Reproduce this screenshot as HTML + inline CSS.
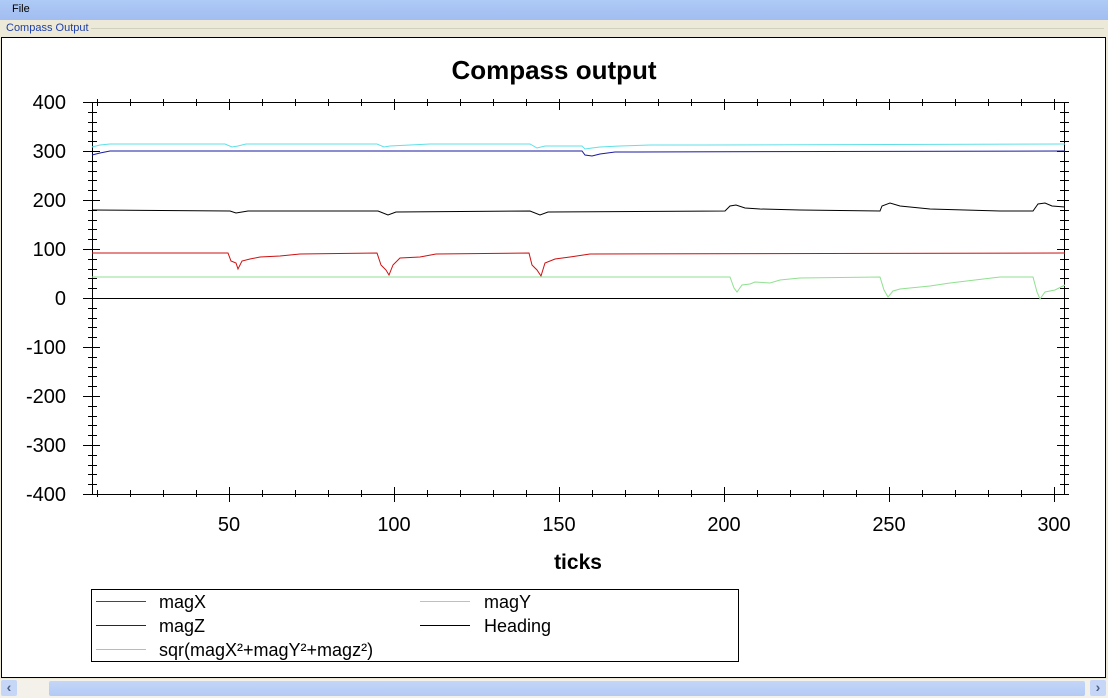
<!DOCTYPE html>
<html><head><meta charset="utf-8"><style>
body{margin:0;width:1108px;height:698px;overflow:hidden;background:#ece9d8;font-family:"Liberation Sans",sans-serif;position:relative}
.menu{position:absolute;left:0;top:0;width:1108px;height:20px;background:linear-gradient(#aecaf6,#a2bdf0);font-size:11px}
.menu span{position:absolute;left:12px;top:3px}
.grp{position:absolute;left:0;top:20px;width:1108px;height:660px;background:#ece9d8}
.lbl{position:absolute;left:6px;top:22px;font-size:11px;color:#1e3fa8;background:#ece9d8;padding-right:2px}
.gline{position:absolute;left:88px;top:28px;width:1016px;height:1px;background:#d0d0bf}
.panel{position:absolute;left:1px;top:37px;width:1103px;height:639px;background:#fff;border:1px solid #000}
.sb{position:absolute;left:0;top:679px;width:1108px;height:19px;background:#f3f1ea}
.thumb{position:absolute;left:49px;top:681px;width:1036px;height:15px;background:linear-gradient(#c4d6f8,#b3caf4);border-radius:2px}
.btn{position:absolute;top:680px;width:16px;height:16px;background:#c5d6f6;border-radius:2px;font-size:14px;font-weight:bold;color:#4d6185;text-align:center;line-height:15px}
.lg{position:absolute;height:1px;width:50px}
</style></head><body>
<div class="menu"><span>File</span></div>
<div class="grp"></div>
<div class="gline"></div>
<div class="lbl">Compass Output</div>
<div class="panel"></div>
<svg id="s" style="position:absolute;left:0;top:0" width="1108" height="698" font-family="Liberation Sans, sans-serif">
<text x="554" y="79" font-size="26" font-weight="bold" text-anchor="middle">Compass output</text>
<text x="578" y="569" font-size="21" font-weight="bold" text-anchor="middle">ticks</text>
<g font-size="20" text-anchor="end">
<text x="66" y="109">400</text><text x="66" y="158">300</text><text x="66" y="207">200</text><text x="66" y="256">100</text><text x="66" y="305">0</text><text x="66" y="354">-100</text><text x="66" y="403">-200</text><text x="66" y="452">-300</text><text x="66" y="501">-400</text>
</g>
<g font-size="20" text-anchor="middle">
<text x="229" y="531">50</text><text x="394" y="531">100</text><text x="559" y="531">150</text><text x="724" y="531">200</text><text x="889" y="531">250</text><text x="1054" y="531">300</text>
</g>
<rect x="92.5" y="102.5" width="972" height="392" fill="none" stroke="#000"/>
<line x1="92" y1="298.5" x2="1065" y2="298.5" stroke="#000"/>
<g id="ticks" stroke="#000" stroke-width="1"></g>
<g fill="none" stroke-width="1">
<polyline stroke="#5fe0e8" points="92,147 100,145 110,144 225,144 232,147 238,146 246,144 377,144 384,147 390,146 410,145 430,144 530,144 537,148 545,146 582,146 585,149 592,148 600,147 620,146 650,145 700,145 1065,144"/>
<polyline stroke="#1a1aa0" points="92,155 100,153 110,151 582,151 585,155 592,156 600,154 615,152 1065,151"/>
<polyline stroke="#000" points="92,210 230,211 236,213 242,212 248,211 378,211 388,215 396,212 530,211 540,215 548,212 725,211 730,206 736,205 745,208 760,209 800,210 880,211 882,206 890,203 900,206 930,209 1000,211 1033,211 1038,204 1045,203 1052,206 1065,207"/>
<polyline stroke="#cc1010" points="92,253 228,253 231,261 236,263 238,269 242,261 250,259 260,257 280,256 300,254 377,253 381,265 386,270 389,275 393,265 400,258 420,257 436,254 529,253 532,265 537,270 541,276 545,263 555,259 570,257 590,254 1065,253"/>
<polyline stroke="#90e090" points="92,277 730,277 734,288 737,292 742,285 750,284 755,282 770,283 780,280 800,278 880,277 884,290 888,297 893,291 900,289 910,288 930,286 950,283 1000,277 1033,277 1037,292 1040,299 1045,292 1055,290 1065,285"/>
</g>
<rect x="91.5" y="589.5" width="647" height="72" fill="#fff" stroke="#000"/>
<g font-size="18">
<text x="159" y="608">magX</text><text x="159" y="632">magZ</text><text x="159" y="656">sqr(magX²+magY²+magz²)</text>
<text x="484" y="608">magY</text><text x="484" y="632">Heading</text>
</g>
</svg>
<div class="lg" style="left:96px;top:601px;background:#cc1010"></div>
<div class="lg" style="left:96px;top:625px;background:#1a1aa0"></div>
<div class="lg" style="left:96px;top:649px;background:#5fe0e8"></div>
<div class="lg" style="left:420px;top:601px;background:#90e090"></div>
<div class="lg" style="left:420px;top:625px;background:#000"></div>
<div class="sb"></div>
<div class="btn" style="left:1px">‹</div>
<div class="thumb"></div>
<div class="btn" style="left:1090px">›</div>
<script>
var g=document.getElementById('ticks'),d='';
for(var t=10;t<=300;t+=10){var x=Math.round(64+3.3*t)+.5;var maj=t%50==0;
 d+='M'+x+' '+(maj?487:490)+'V'+(maj?502:497);
 d+='M'+x+' 99V'+(maj?110:106);}
for(var v=-400;v<=400;v+=20){var y=Math.round(298-0.49*v)+.5;var maj=v%100==0;
 d+='M'+(maj?83:88)+' '+y+'H'+(maj?100:97);
 d+='M'+(maj?1057:1060)+' '+y+'H'+1069;}
var p=document.createElementNS('http://www.w3.org/2000/svg','path');p.setAttribute('d',d);g.appendChild(p);
</script>
</body></html>
